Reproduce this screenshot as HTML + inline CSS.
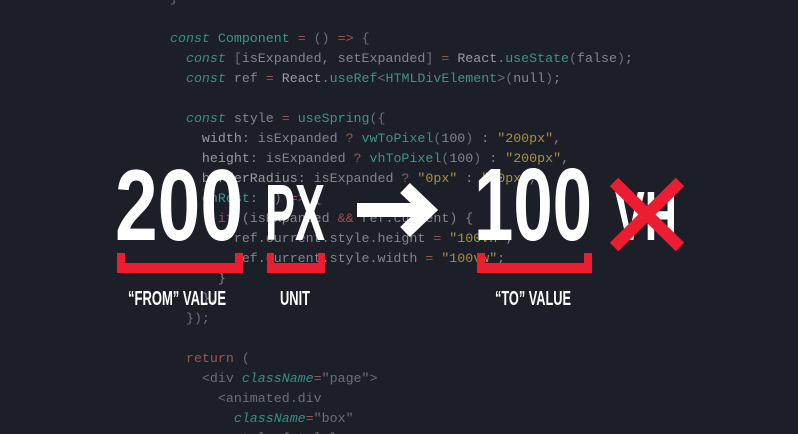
<!DOCTYPE html>
<html><head><meta charset="utf-8"><style>
html,body{margin:0;padding:0;background:#1c1e28;width:798px;height:434px;overflow:hidden;position:relative}
pre{position:absolute;left:170px;top:-11px;margin:0;font-family:"Liberation Mono",monospace;font-size:13.3px;line-height:20px;color:#83858e}
.k{color:#369082;font-style:italic}.f{color:#3c9688}.s{color:#a99240}.o{color:#9c5255}.p{color:#6c6f7a}.w{color:#989aa2}
svg{position:absolute;left:0;top:0}
</style></head><body>
<pre><span class="p">}</span>

<span class="k">const</span> <span class="f">Component</span> <span class="o">=</span> <span class="p">()</span> <span class="o">=&gt;</span> <span class="p">{</span>
  <span class="k">const</span> <span class="p">[</span>isExpanded, setExpanded<span class="p">]</span> <span class="o">=</span> <span class="w">React</span>.<span class="f">useState</span><span class="p">(</span>false<span class="p">)</span>;
  <span class="k">const</span> ref <span class="o">=</span> <span class="w">React</span>.<span class="f">useRef</span><span class="p">&lt;</span><span class="f">HTMLDivElement</span><span class="p">&gt;(</span>null<span class="p">)</span>;

  <span class="k">const</span> style <span class="o">=</span> <span class="f">useSpring</span><span class="p">({</span>
    <span class="w">width</span>: isExpanded <span class="o">?</span> <span class="f">vwToPixel</span><span class="p">(</span>100<span class="p">)</span> : <span class="s">"200px"</span>,
    <span class="w">height</span>: isExpanded <span class="o">?</span> <span class="f">vhToPixel</span><span class="p">(</span>100<span class="p">)</span> : <span class="s">"200px"</span>,
    <span class="w">borderRadius</span>: isExpanded <span class="o">?</span> <span class="s">"0px"</span> : <span class="s">"50px"</span>,
    <span class="f">onRest</span>: () <span class="o">=&gt;</span> {
      <span class="o">if</span> (isExpanded <span class="o">&amp;&amp;</span> ref.current) {
        ref.current.style.height <span class="o">=</span> <span class="s">"100vh"</span>;
        ref.current.style.width <span class="o">=</span> <span class="s">"100vw"</span>;
      }
    },
  <span class="p">});</span>

  <span class="o">return</span> <span class="p">(</span>
    <span class="p">&lt;div</span> <span class="k">className</span><span class="o">=</span><span class="p">"page"&gt;</span>
      <span class="p">&lt;animated.div</span>
        <span class="k">className</span><span class="o">=</span><span class="p">"box"</span>
        style={style}</pre>
<svg width="798" height="434" viewBox="0 0 798 434">
<g font-family="Liberation Sans, sans-serif" font-weight="bold" fill="#fff">
<text x="115" y="240" font-size="101" textLength="128" lengthAdjust="spacingAndGlyphs">200</text>
<text x="265" y="240" font-size="80" textLength="60" lengthAdjust="spacingAndGlyphs">PX</text>
<text x="474" y="240" font-size="103" textLength="118" lengthAdjust="spacingAndGlyphs">100</text>
<text x="615" y="240" font-size="70" textLength="62" lengthAdjust="spacingAndGlyphs">VH</text>
<text x="128" y="305" font-size="20" textLength="98" lengthAdjust="spacingAndGlyphs">“FROM” VALUE</text>
<text x="280" y="305" font-size="20" textLength="30" lengthAdjust="spacingAndGlyphs">UNIT</text>
<text x="495" y="305" font-size="20" textLength="76" lengthAdjust="spacingAndGlyphs">“TO” VALUE</text>
</g>
<g fill="none" stroke="#fff" stroke-width="14" stroke-linecap="butt" stroke-linejoin="miter">
<line x1="357" y1="210" x2="428" y2="210"/>
<polyline points="405,188 428,210 405,232"/>
</g>
<g stroke="#ec1c31" stroke-width="12">
<line x1="614" y1="182" x2="680" y2="247"/>
<line x1="680" y1="182" x2="614" y2="247"/>
</g>
<g fill="#ec1c31">
<path d="M117 253h8v10h110v-10h8v20h-126z"/>
<path d="M267 253h7v10h44v-10h7v20h-58z"/>
<path d="M477 253h8v10h99v-10h8v20h-115z"/>
</g>
</svg>
</body></html>
